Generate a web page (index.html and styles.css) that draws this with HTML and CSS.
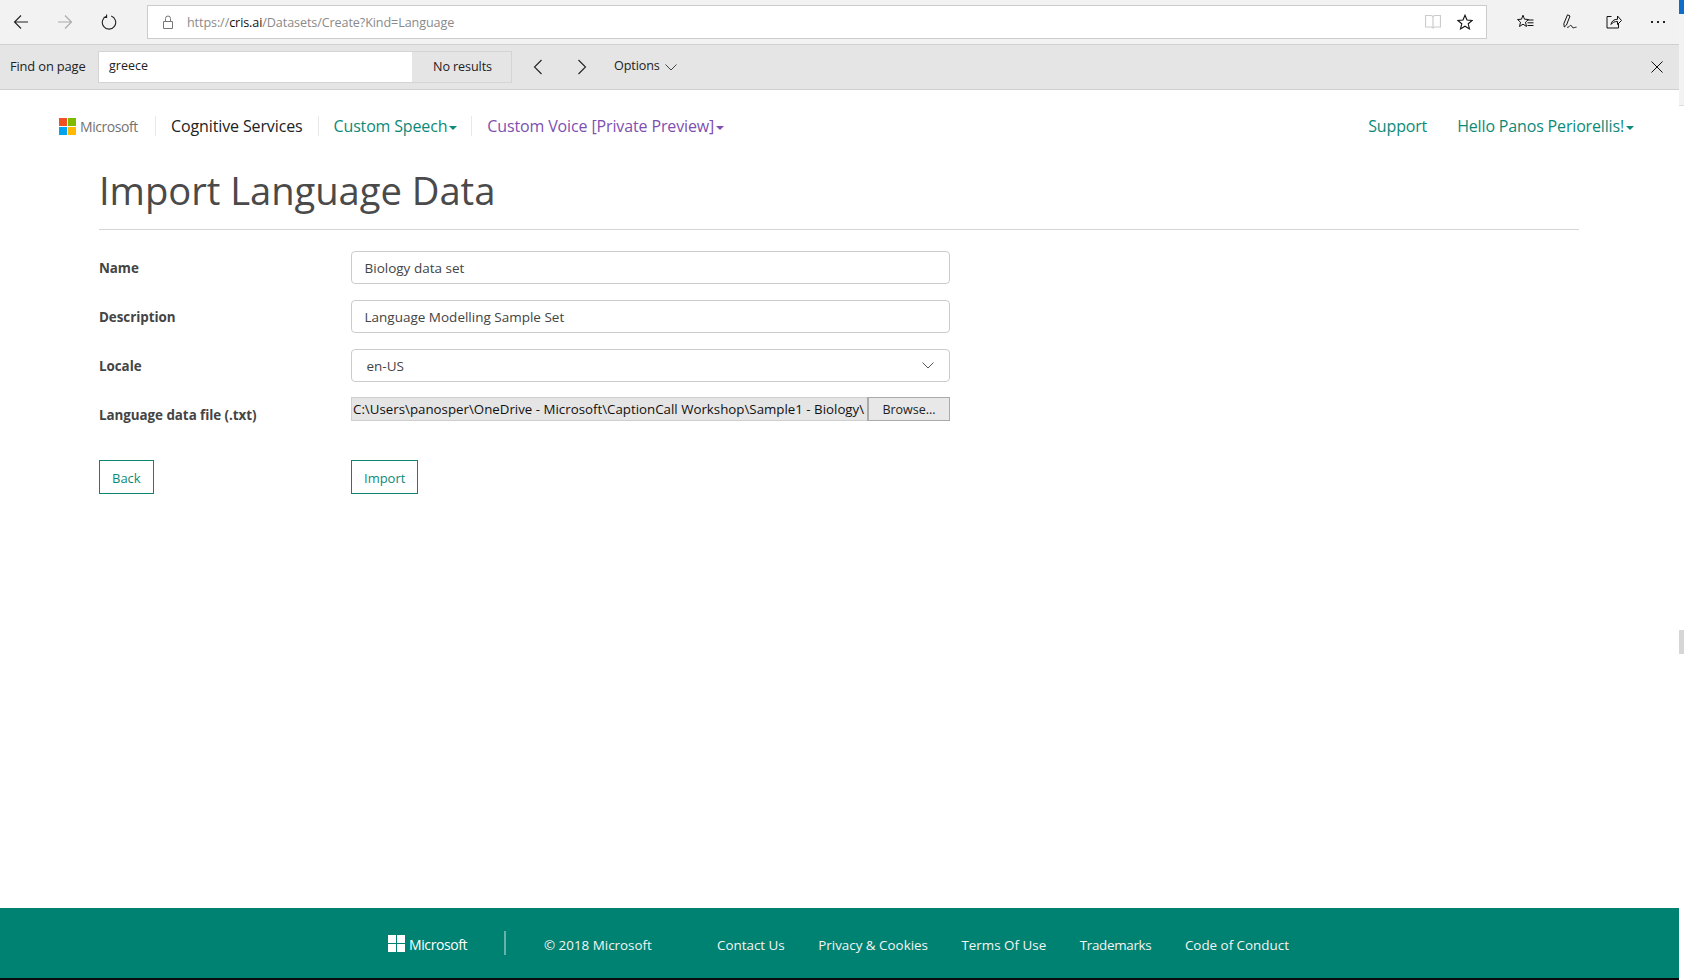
FILE: index.html
```html
<!DOCTYPE html>
<html lang="en">
<head>
<meta charset="utf-8">
<title>Import Language Data</title>
<link rel="stylesheet" href="styles.css">
</head>
<body>
<div class="shell">
  <div class="browser">
    <div class="toolbar">
      <div class="nav-btns">
        <svg class="ico" width="16" height="16" viewBox="0 0 16 16"><path d="M15 8H1.500M8 1.500 1.500 8 8 14.500" fill="none" stroke="#222" stroke-width="1.100"/></svg>
        <svg class="ico" width="16" height="16" viewBox="0 0 16 16"><path d="M1 8h13.500M8 1.500 14.500 8 8 14.500" fill="none" stroke="#aaa" stroke-width="1.100"/></svg>
        <svg class="ico" width="16" height="16" viewBox="0 0 16 16"><path d="M5.800 2.100A6.700 6.700 0 1 0 10.200 2.100M5.600 .5V3.400H2.700" fill="none" stroke="#222" stroke-width="1.100"/></svg>
      </div>
      <div class="address">
        <svg class="lock" width="12" height="14" viewBox="0 0 12 14"><path d="M1.500 6.500h9v7h-9zM3.500 6.500V3.500a2.500 2.500 0 0 1 5 0v3" fill="none" stroke="#777" stroke-width="1"/></svg>
        <div class="url">https://<b>cris.ai</b>/Datasets/Create?Kind=Language</div>
        <svg class="book" width="16" height="15" viewBox="0 0 16 15"><path d="M.5 1.500h6l1.500 1 1.500-1h6v11.500h-6l-1.500 1-1.500-1h-6zM8 2.500v10.500" fill="none" stroke="#ccc" stroke-width="1.200"/></svg>
        <svg class="star" width="16" height="16" viewBox="0 0 16 16"><path d="m8 1.200 2 4.800 5.200.4-4 3.400 1.300 5.100L8 12.200l-4.500 2.700 1.300-5.100-4-3.400L6 6z" fill="none" stroke="#111" stroke-width="1.100"/></svg>
      </div>
      <div class="tools">
        <svg width="17" height="16" viewBox="0 0 17 16"><path d="m6 1.200 1.500 4 4 .3-3 2.700 1 4.300L6 10.200l-3.500 2.300 1-4.300-3-2.700 4-.3zM10.500 6H16.500M10.500 8.800H16.500M10.500 11.500H16.500" fill="none" stroke="#111" stroke-width="1"/></svg>
        <svg width="16" height="16" viewBox="0 0 16 16"><path d="M5.500 .8 8 2 4.500 11 2.300 13 1.800 9.800zM5 13c1.500 1.500 2.500-2.200 4-1.500s1 2.300 2.200 2.300 1.500-.6 3.300-.6" fill="none" stroke="#111" stroke-width="1"/></svg>
        <svg width="16" height="16" viewBox="0 0 16 16"><path d="M5.500 2.500H1v11.500h11.500V9M5 10.500c.5-3.500 3-5.200 6.500-5.200V2l4 4.500-4 4V7.500c-2.800 0-5 .8-6.500 3z" fill="none" stroke="#111" stroke-width="1"/></svg>
        <div class="dots"><i></i><i></i><i></i></div>
      </div>
    </div>
    <div class="findbar">
      <div class="find-label">Find on page</div>
      <div class="find-box">
        <div class="find-input">greece</div>
        <div class="find-count">No results</div>
      </div>
      <svg class="find-prev" width="10" height="16" viewBox="0 0 10 16"><path d="M8.500 1 1.500 8l7 7" fill="none" stroke="#222" stroke-width="1.100"/></svg>
      <svg class="find-next" width="10" height="16" viewBox="0 0 10 16"><path d="m1.500 1 7 7-7 7" fill="none" stroke="#222" stroke-width="1.100"/></svg>
      <div class="find-options">Options
        <svg width="12" height="7" viewBox="0 0 12 7"><path d="m.5.500 5.500 5.500L11.500.5" fill="none" stroke="#444" stroke-width="1"/></svg>
      </div>
      <svg class="find-close" width="12" height="12" viewBox="0 0 12 12"><path d="m.5.500 11 11M11.500.5l-11 11" fill="none" stroke="#111" stroke-width="1"/></svg>
    </div>
  </div>

  <div class="viewport">
    <header class="site-nav">
      <div class="brand">
        <svg width="17" height="17" viewBox="0 0 17 17"><path fill="#f25022" d="M0 0h8v8H0z"/><path fill="#7fba00" d="M9 0h8v8H9z"/><path fill="#00a4ef" d="M0 9h8v8H0z"/><path fill="#ffb900" d="M9 9h8v8H9z"/></svg>
        <span>Microsoft</span>
      </div>
      <div class="nav-title">Cognitive Services</div>
      <div class="nav-link teal nav-sep">Custom Speech<i class="caret"></i></div>
      <div class="nav-link purple">Custom Voice [Private Preview]<i class="caret"></i></div>
      <div class="nav-right">
        <div class="nav-link teal plain">Support</div>
        <div class="nav-link teal plain">Hello Panos Periorellis!<i class="caret"></i></div>
      </div>
    </header>

    <main class="content">
      <h1 class="page-title">Import Language Data</h1>
      <div class="form">
        <div class="row">
          <div class="label">Name</div>
          <div class="field">Biology data set</div>
        </div>
        <div class="row">
          <div class="label">Description</div>
          <div class="field">Language Modelling Sample Set</div>
        </div>
        <div class="row row-last-field">
          <div class="label">Locale</div>
          <div class="field select">en-US
            <svg width="12" height="7" viewBox="0 0 12 7"><path d="m.5.500 5.500 5.500L11.500.5" fill="none" stroke="#555" stroke-width="1"/></svg>
          </div>
        </div>
        <div class="row file-row">
          <div class="label file-label">Language data file (.txt)</div>
          <div class="file">
            <div class="file-path">C:\Users\panosper\OneDrive - Microsoft\CaptionCall Workshop\Sample1 - Biology\</div>
            <div class="file-btn">Browse...</div>
          </div>
        </div>
        <div class="row actions">
          <div class="action-left"><div class="btn">Back</div></div>
          <div class="btn">Import</div>
        </div>
      </div>
    </main>

    <footer class="footer">
      <div class="foot-brand">
        <svg width="17" height="17" viewBox="0 0 17 17"><path fill="#fff" d="M0 0h8v8H0zM9 0h8v8H9zM0 9h8v8H0zM9 9h8v8H9z"/></svg>
        <span class="foot-word">Microsoft</span>
      </div>
      <div class="foot-sep"></div>
      <div class="foot-copy">© 2018 Microsoft</div>
      <div class="foot-links">
        <span>Contact Us</span>
        <span>Privacy &amp; Cookies</span>
        <span>Terms Of Use</span>
        <span class="foot-tm">Trademarks</span>
        <span>Code of Conduct</span>
      </div>
    </footer>
    <div class="taskbar"></div>
  </div>
</div>
<div class="rail"><div class="rail-accent"></div><div class="rail-grey"></div><div class="rail-thumb"></div></div>
</body>
</html>
```

FILE: styles.css
```css
* { box-sizing: border-box; }
html, body { margin: 0; height: 100%; overflow: hidden; }
body {
  display: flex;
  background: #fff;
  font-family: "Open Sans", "Noto Sans", sans-serif;
  font-size: 13px;
  color: #444;
}
.shell { width: 1679px; height: 980px; display: flex; flex-direction: column; flex: none; }

/* side rail */
.rail { flex: 1; position: relative; background: #fff; }
.rail-accent { height: 14px; background: #0f6cc9; }
.rail-grey { height: 92px; background: #f3f3f3; border-bottom: 1px solid #ddd; }
.rail-thumb { position: absolute; left: 0; top: 630px; width: 5px; height: 24px; background: #d6d6d6; }

/* browser chrome */
.browser { flex: none; }
.toolbar {
  height: 45px;
  background: #f2f2f2;
  border-bottom: 1px solid #cfcfcf;
  display: flex;
  align-items: center;
  padding: 0 0 1px 13px;
}
.nav-btns { display: flex; gap: 28px; width: 134px; align-items: center; }
.address {
  width: 1340px;
  height: 34px;
  background: #fff;
  border: 1px solid #ccc;
  display: flex;
  align-items: center;
  padding: 0 7px 0 14px;
}
.lock { flex: none; }
.url { flex: 1; margin-left: 13px; padding-top: 1px; color: #8a8a8a; font-size: 12.600px; letter-spacing: -.1px; }
.url b { font-weight: 400; color: #111; }
.book { margin-right: 16px; }
.star { margin-right: 6px; }
.tools { flex: 1; display: flex; align-items: center; padding-left: 30px; gap: 28px; }
.dots { display: flex; gap: 4px; margin-left: 1px; }
.dots i { width: 2px; height: 2px; background: #222; display: block; }

.findbar {
  height: 45px;
  background: #e5e5e5;
  border-bottom: 1px solid #cfcfcf;
  display: flex;
  align-items: center;
  position: relative;
  padding: 0 0 0 10px;
  color: #222;
  font-size: 12.600px;
}
.find-label { width: 88px; font-size: 12.900px; letter-spacing: -.15px; margin-top: -3px; }
.find-box {
  width: 414px;
  height: 32px;
  border: 1px solid #d4d4d4;
  display: flex;
}
.find-input { width: 313px; background: #fff; padding: 5px 10px; font-size: 12.500px; line-height: 18px; }
.find-count { flex: 1; text-align: center; padding-left: 2px; line-height: 30px; letter-spacing: -.1px; }
.find-prev { margin-left: 21px; }
.find-next { margin-left: 34px; }
.find-options { margin-left: 27px; display: flex; align-items: center; gap: 5px; margin-top: -3px; letter-spacing: -.1px; }
.find-options svg { margin-top: 3px; }
.find-close { margin-left: auto; margin-right: 16px; }

/* page */
.viewport { flex: 1; display: flex; flex-direction: column; min-height: 0; }
.site-nav {
  flex: none;
  height: 72px;
  padding: 0 45px 0 59px;
  display: flex;
  align-items: center;
  font-size: 16px;
}
.brand { display: flex; align-items: center; gap: 4px; width: 97px; height: 20px; border-right: 1px solid #e8e8e8; color: #737373; font-size: 14px; letter-spacing: -.45px; }
.nav-title { color: #222; padding: 0 15px 0 15px; height: 20px; line-height: 20px; border-right: 1px solid #e8e8e8; letter-spacing: -.12px; }
.nav-link { white-space: nowrap; height: 20px; line-height: 20px; padding: 0 14px 0 15px; letter-spacing: -.16px; font-weight: 500; }
.nav-sep { border-right: 1px solid #e8e8e8; padding: 0 14px 0 15px; }
.nav-link.plain { padding: 0; }
.teal { color: #0c8a79; }
.purple { color: #7e4fb0; letter-spacing: -.13px; }
.caret {
  display: inline-block;
  margin-left: 2px;
  vertical-align: 2px;
  border-top: 4px solid currentColor;
  border-left: 4px solid transparent;
  border-right: 4px solid transparent;
}
.nav-right { margin-left: auto; display: flex; gap: 30px; }

.content { flex: 1; padding: 0 100px 0 99px; min-height: 0; }
.page-title {
  margin: 0;
  height: 68px;
  padding-top: 5px;
  border-bottom: 1px solid #d5d5d5;
  font-size: 38.200px;
  line-height: 46px;
  font-weight: 400;
  color: #4a4a4a;
  letter-spacing: -.05px;
}
.form { padding-top: 21px; }
.row { display: flex; align-items: flex-start; height: 49px; }
.row-last-field { height: 48px; }
.label { width: 252px; font-weight: 700; font-size: 13.400px; line-height: 35px; color: #444; letter-spacing: -.05px; }
.file-label { line-height: 37px; }
.field {
  width: 599px;
  height: 33px;
  border: 1px solid #ccc;
  border-radius: 4px;
  padding: 0 12.500px;
  line-height: 32px;
  font-size: 13.500px;
  color: #444;
}
.select { display: flex; justify-content: space-between; align-items: center; padding: 0 15px 0 14.500px; }
.file-row { height: 63px; }
.file { width: 599px; height: 24px; display: flex; background: #e5e5e5; border: 1px solid #cfcfcf; }
.file-path { flex: 1; min-width: 0; overflow: hidden; white-space: nowrap; padding-left: 1px; font-size: 13.300px; line-height: 23px; color: #111; }
.file-btn { flex: none; width: 81px; background: #e8e8e8; border-left: 1px solid #aaa; outline: 1px solid #aaa; text-align: center; color: #222; line-height: 23px; font-size: 12.500px; }
.actions { height: 34px; }
.action-left { width: 252px; }
.btn {
  display: inline-block;
  height: 34px;
  border: 1px solid #0c8270;
  padding: 0 12px;
  line-height: 34px;
  font-size: 13px;
  color: #0c8a79;
  background: #fff;
}

/* footer */
.footer {
  flex: none;
  height: 70px;
  background: #008272;
  display: flex;
  align-items: center;
  padding-left: 388px;
  color: #f4f4f4;
  font-size: 13.400px;
}
.foot-brand { display: flex; align-items: center; gap: 4px; width: 116px; font-size: 14px; letter-spacing: -.4px; color: #fff; }
.foot-word { padding-top: 2px; }
.foot-sep { width: 2px; height: 24px; background: #66b3aa; }
.foot-copy { width: 173px; margin-left: 38px; padding-top: 3px; }
.foot-links { display: flex; gap: 33.500px; padding-top: 3px; }
.foot-tm { letter-spacing: -.3px; }
.taskbar { flex: none; height: 2px; background: #0b0b10; }
```
